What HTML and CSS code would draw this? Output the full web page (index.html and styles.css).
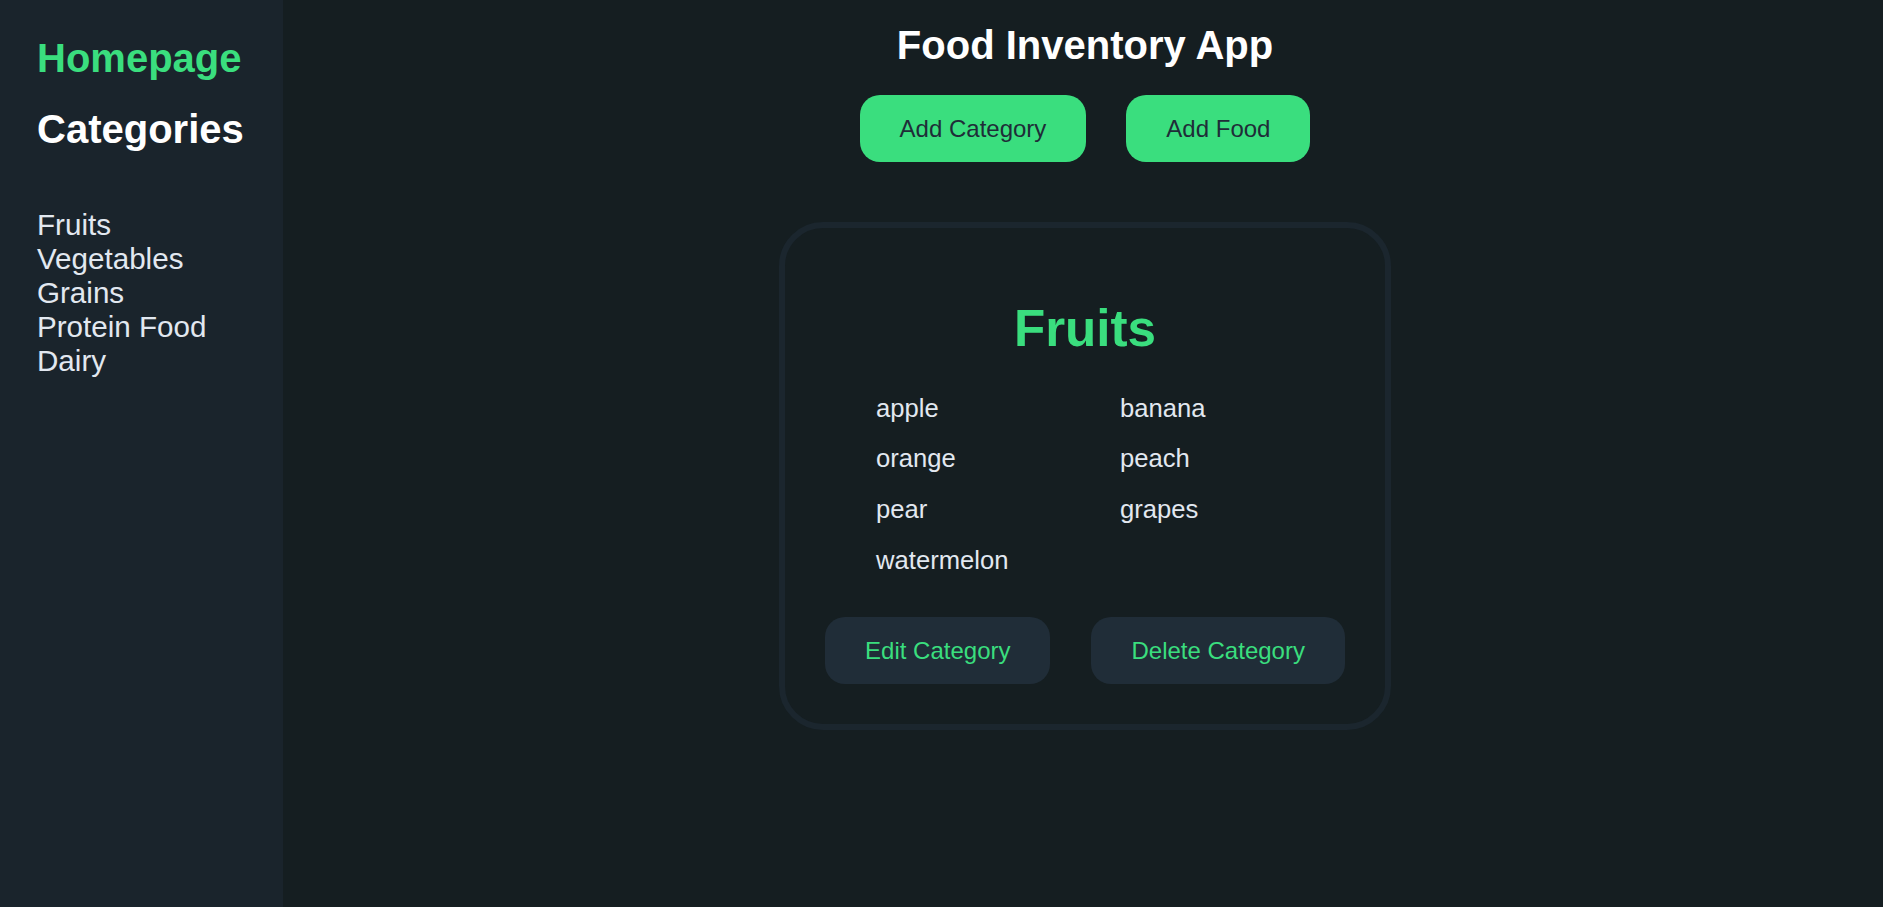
FILE: index.html
```html
<!DOCTYPE html>
<html lang="en">
<head>
<meta charset="utf-8">
<title>Food Inventory App</title>
<link rel="stylesheet" href="styles.css">
</head>
<body>
<aside class="sidebar">
  <a class="home-link" href="#">Homepage</a>
  <h2 class="side-title">Categories</h2>
  <ul class="side-list">
    <li>Fruits</li>
    <li>Vegetables</li>
    <li>Grains</li>
    <li>Protein Food</li>
    <li>Dairy</li>
  </ul>
</aside>
<main class="main">
  <h1 class="app-title">Food Inventory App</h1>
  <div class="top-actions">
    <button class="btn btn-primary">Add Category</button>
    <button class="btn btn-primary">Add Food</button>
  </div>
  <section class="card">
    <h2 class="card-title">Fruits</h2>
    <ul class="food-list">
      <li>apple</li>
      <li>banana</li>
      <li>orange</li>
      <li>peach</li>
      <li>pear</li>
      <li>grapes</li>
      <li>watermelon</li>
    </ul>
    <div class="card-actions">
      <button class="btn btn-dark">Edit Category</button>
      <button class="btn btn-dark">Delete Category</button>
    </div>
  </section>
</main>
</body>
</html>
```
FILE: styles.css
```css
* { box-sizing: border-box; }

html, body {
  margin: 0;
  height: 100%;
}

body {
  display: flex;
  background: #151e21;
  font-family: "Liberation Sans", Arial, sans-serif;
  color: #e2e8f0;
}

.sidebar {
  width: 283px;
  flex: 0 0 283px;
  background: #1a242c;
  padding: 35px 0 0 37px;
  display: flex;
  flex-direction: column;
  align-items: flex-start;
}

.home-link {
  font-size: 40px;
  font-weight: bold;
  color: #3ade7e;
  text-decoration: none;
  line-height: 46px;
}

.side-title {
  margin: 25px 0 0;
  font-size: 40px;
  line-height: 46px;
  font-weight: bold;
  color: #ffffff;
}

.side-list {
  list-style: none;
  margin: 56px 0 0;
  padding: 0;
  font-size: 29.6px;
  line-height: 34px;
  color: #e2e8f0;
}

.main {
  flex: 1;
  display: flex;
  flex-direction: column;
  align-items: center;
  padding-left: 4px;
}

.app-title {
  margin: 21.5px 0 0;
  font-size: 40px;
  line-height: 46px;
  font-weight: bold;
  color: #ffffff;
}

.top-actions {
  display: flex;
  gap: 40px;
  margin-top: 27px;
}

.btn {
  font-family: "Liberation Sans", Arial, sans-serif;
  font-size: 24px;
  line-height: 27.5px;
  padding: 20px 40px;
  border: none;
  border-radius: 20px;
  cursor: pointer;
}

.btn-primary {
  background: #3ade7e;
  color: #1f2d38;
}

.btn-dark {
  background: #202d38;
  color: #3ade7e;
}

.card {
  margin-top: 60px;
  width: fit-content;
  border: 6px solid #1b262e;
  border-radius: 44px;
  padding: 40px;
  background: #151e21;
}

.card-title {
  margin: 32px 0 24px;
  text-align: center;
  font-size: 51.2px;
  line-height: 58.8px;
  font-weight: bold;
  color: #3ade7e;
}

.food-list {
  list-style: none;
  margin: 0;
  padding: 0 0 0 51px;
  display: grid;
  grid-template-columns: 244px 1fr;
  font-size: 25.6px;
  line-height: 50.67px;
  color: #e2e8f0;
}

.card-actions {
  display: flex;
  gap: 41px;
  margin-top: 31.5px;
}
```
